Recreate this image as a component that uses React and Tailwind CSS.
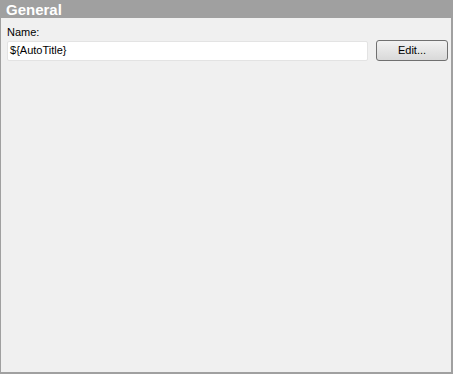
import React from "react";

export default function App() {
  return (
    <div
      className="w-[453px] h-[374px] flex flex-col bg-[#f0f0f0] border-l border-t border-r-2 border-b-2 border-[#a0a0a0] text-[11px] text-black"
      style={{ fontFamily: '"Liberation Sans", Arial, sans-serif' }}
    >
      {/* header */}
      <div className="h-[17px] bg-[#a0a0a0] px-[5px] flex items-center shrink-0">
        <span className="text-white font-bold text-[15px] leading-none">General</span>
      </div>

      <div className="pl-[6px] pr-[3px] pt-[8px]">
        <div className="leading-[13px]">Name:</div>
        <div className="flex items-center gap-[8px] mt-[1px]">
          <div className="flex-1 h-[20px] bg-white border border-[#e3e3e3] rounded-[2px] flex items-center px-[2px]">
            ${"{AutoTitle}"}
          </div>
          <button className="w-[72px] h-[21px] rounded-[3px] border border-[#707070] bg-gradient-to-b from-[#f2f2f2] to-[#d9d9d9] flex items-center justify-center text-[11px]">
            Edit...
          </button>
        </div>
      </div>
    </div>
  );
}
